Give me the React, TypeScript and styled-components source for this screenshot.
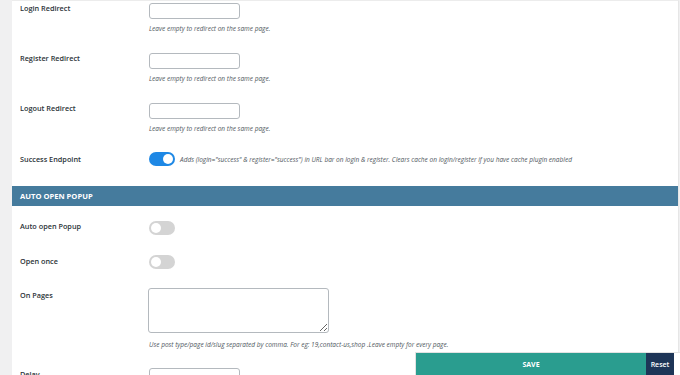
import React from 'react';
import styled, { createGlobalStyle } from 'styled-components';

const GlobalStyle = createGlobalStyle`
  html, body {
    margin: 0;
    padding: 0;
    height: 375px;
    overflow: hidden;
    background: #f0f0f1;
    font-family: "Open Sans", "Liberation Sans", sans-serif;
  }
`;

const Page = styled.div`
  display: flex;
  height: 375px;
  padding-left: 12px;
`;

const Panel = styled.div`
  width: 667px;
  height: 375px;
  background: #fff;
  border-top: 1px solid #ececec;
  border-right: 1px solid #e6e6e6;
  box-sizing: border-box;
  overflow: hidden;
`;

const Row = styled.div<{ $top: number; $height: number }>`
  display: grid;
  grid-template-columns: 129px 1fr;
  align-items: start;
  padding: ${(p) => p.$top}px 0 0 8px;
  height: ${(p) => p.$height}px;
  box-sizing: border-box;
`;

const Label = styled.div<{ $offset?: number }>`
  font-size: 7.3px;
  font-weight: 600;
  color: #2c3338;
  line-height: 11px;
  padding-top: ${(p) => p.$offset ?? 0}px;
`;

const Field = styled.div`
  display: flex;
  flex-direction: column;
  align-items: flex-start;
`;

const TextInput = styled.input`
  width: 91px;
  height: 16px;
  box-sizing: border-box;
  border: 1px solid #b4b9be;
  border-radius: 3px;
  padding: 0 4px;
  margin: 0;
  background: #fff;
`;

const TextArea = styled.textarea`
  width: 181px;
  height: 45px;
  box-sizing: border-box;
  border: 1px solid #b4b9be;
  border-radius: 3px;
  margin: 0 0 0 -1px;
  padding: 2px 4px;
  resize: vertical;
`;

const Desc = styled.p<{ $gap: number }>`
  margin: ${(p) => p.$gap}px 0 0;
  font-size: 6.5px;
  font-style: italic;
  color: #50575e;
  line-height: 9px;
  white-space: nowrap;
`;

const Inline = styled.div`
  display: flex;
  align-items: center;
  gap: 5px;
`;

const Toggle = styled.span<{ $on?: boolean }>`
  position: relative;
  display: block;
  width: 26px;
  height: 14px;
  border-radius: 7px;
  background: ${(p) => (p.$on ? '#1e88e5' : '#d4d4d4')};
  flex-shrink: 0;

  &::after {
    content: '';
    position: absolute;
    top: 2px;
    left: ${(p) => (p.$on ? '14px' : '2px')};
    width: 10px;
    height: 10px;
    border-radius: 50%;
    background: #fff;
  }
`;

const SectionHeader = styled.div`
  height: 20px;
  background: #457b9d;
  color: #fff;
  font-size: 7.6px;
  font-weight: 700;
  display: flex;
  align-items: center;
  padding-left: 8px;
`;

const Footer = styled.div`
  position: fixed;
  left: 415px;
  bottom: 0;
  width: 265px;
  height: 23px;
  display: flex;
  background: #fff;
  border-top: 1px solid #e2e2e2;
  border-left: 1px solid #e2e2e2;
  box-sizing: border-box;
  padding-right: 6px;
`;

const SaveButton = styled.button`
  flex: 1;
  border: none;
  background: #2a9d8f;
  color: #fff;
  font-family: "Open Sans", "Liberation Sans", sans-serif;
  font-size: 7px;
  font-weight: 700;
  padding: 0;
`;

const ResetButton = styled.button`
  width: 28px;
  border: none;
  background: #1d3557;
  color: #fff;
  font-family: "Open Sans", "Liberation Sans", sans-serif;
  font-size: 7px;
  font-weight: 600;
  padding: 0;
`;

const redirects = ['Login Redirect', 'Register Redirect', 'Logout Redirect'];

export default function App() {
  return (
    <>
      <GlobalStyle />
      <Page>
        <Panel>
          {redirects.map((name) => (
            <Row key={name} $top={2} $height={50}>
              <Label>{name}</Label>
              <Field>
                <TextInput type="text" />
                <Desc $gap={5}>Leave empty to redirect on the same page.</Desc>
              </Field>
            </Row>
          ))}
          <Row $top={1} $height={35}>
            <Label $offset={2}>Success Endpoint</Label>
            <Inline>
              <Toggle $on />
              <Desc $gap={0}>
                Adds (login="success" &amp; register="success") in URL bar on login &amp; register. Clears cache on login/register if you have cache plugin enabled
              </Desc>
            </Inline>
          </Row>
          <SectionHeader>AUTO OPEN POPUP</SectionHeader>
          <Row $top={15} $height={49}>
            <Label $offset={0}>Auto open Popup</Label>
            <Toggle />
          </Row>
          <Row $top={0} $height={33}>
            <Label $offset={1}>Open once</Label>
            <Toggle />
          </Row>
          <Row $top={0} $height={78}>
            <Label $offset={2}>On Pages</Label>
            <Field>
              <TextArea />
              <Desc $gap={7}>
                Use post type/page id/slug separated by comma. For eg: 19,contact-us,shop .Leave empty for every page.
              </Desc>
            </Field>
          </Row>
          <Row $top={2} $height={40}>
            <Label $offset={1}>Delay</Label>
            <Field>
              <TextInput type="text" />
            </Field>
          </Row>
        </Panel>
      </Page>
      <Footer>
        <SaveButton>SAVE</SaveButton>
        <ResetButton>Reset</ResetButton>
      </Footer>
    </>
  );
}
